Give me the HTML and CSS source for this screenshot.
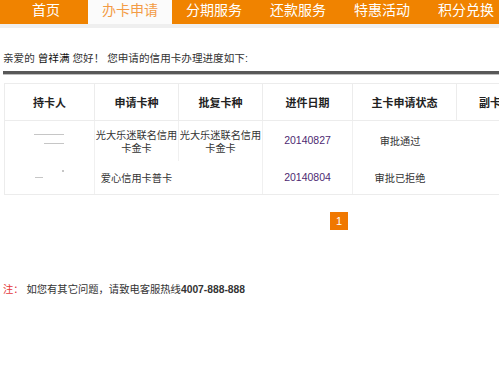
FILE: index.html
```html
<!DOCTYPE html>
<html lang="zh-CN">
<head>
<meta charset="utf-8">
<title>办卡申请进度</title>
<link rel="stylesheet" href="styles.css">
</head>
<body>
<div class="page">
  <nav class="nav">
    <a class="nav-item">首页</a>
    <a class="nav-item active">办卡申请</a>
    <a class="nav-item">分期服务</a>
    <a class="nav-item">还款服务</a>
    <a class="nav-item">特惠活动</a>
    <a class="nav-item">积分兑换</a>
  </nav>
  <div class="nav-strip"></div>
  <div class="content">
    <p class="greet">亲爱的 <span class="name">曾祥满</span> 您好！ 您申请的信用卡办理进度如下:</p>
    <div class="rule"></div>
    <div class="table-wrap">
    <table class="prog">
      <colgroup>
        <col class="c1"><col class="c2"><col class="c3"><col class="c4"><col class="c5"><col class="c6">
      </colgroup>
      <thead>
        <tr class="head">
          <th>持卡人</th>
          <th>申请卡种</th>
          <th>批复卡种</th>
          <th>进件日期</th>
          <th>主卡申请状态</th>
          <th class="last">副卡</th>
        </tr>
      </thead>
      <tbody>
        <tr class="r1">
          <td class="holder"><span class="mask m1"></span><span class="mask m2"></span></td>
          <td class="card"><div class="card-name">光大乐迷联名信用卡金卡</div></td>
          <td class="card"><div class="card-name">光大乐迷联名信用卡金卡</div></td>
          <td class="date">20140827</td>
          <td class="status nb">审批通过</td>
          <td class="nb"></td>
        </tr>
        <tr class="r2">
          <td class="holder"><span class="mask m3"></span><span class="mask m4"></span></td>
          <td class="card nb"><div class="card-name">爱心信用卡普卡</div></td>
          <td class="card"></td>
          <td class="date">20140804</td>
          <td class="status nb">审批已拒绝</td>
          <td class="nb"></td>
        </tr>
      </tbody>
    </table>
    </div>
    <div class="pager"><span class="page-num">1</span></div>
    <p class="note"><span class="note-label">注：</span> 如您有其它问题，请致电客服热线<b class="hotline">4007-888-888</b></p>
  </div>
</div>
</body>
</html>
```
FILE: styles.css
```css
html, body {
  margin: 0;
  padding: 0;
  background: #fff;
}
body {
  font-family: "Liberation Sans", "Noto Sans CJK SC", sans-serif;
  color: #333;
  font-size: 11px;
}
.page {
  width: 499px;
  overflow: hidden;
}
.nav {
  display: flex;
  height: 24px;
  background: #f08300;
  padding-left: 4px;
  white-space: nowrap;
}
.nav-item {
  flex: 0 0 84px;
  text-align: center;
  color: #fff;
  font-size: 14px;
  line-height: 18px;
  font-family: "Noto Sans CJK SC", sans-serif;
}
.nav-item.active {
  background: #fbfbfb;
  color: #f39b45;
}
.nav-strip {
  height: 4px;
  background: #efefef;
}
.content {
  padding-left: 3px;
}
.greet {
  margin: 23px 0 0;
  line-height: 14px;
  font-size: 10.6px;
  color: #333;
  white-space: nowrap;
}
.name {
  color: #111;
}
.rule {
  margin-top: 6px;
  height: 3px;
  background: #585858;
  border-bottom: 1px solid #bdbdbd;
}
.table-wrap {
  margin-top: 8px;
  margin-left: 1px;
  width: 495px;
  overflow: hidden;
}
.prog {
  border-collapse: separate;
  border-spacing: 0;
  table-layout: fixed;
  width: 556px;
  border-top: 1px solid #ececec;
  border-left: 1px solid #ececec;
  border-bottom: 1px solid #ececec;
}
.c1 { width: 90px; }
.c2 { width: 84px; }
.c3 { width: 84px; }
.c4 { width: 90px; }
.c5 { width: 104px; }
.c6 { width: 104px; }
.prog th {
  padding: 0;
  font-size: 11px;
  font-weight: bold;
  color: #222;
  text-align: center;
  border-right: 1px solid #ececec;
  border-bottom: 1px solid #ececec;
  font-family: "Noto Sans CJK SC", sans-serif;
  white-space: nowrap;
}
.prog th.last {
  text-align: left;
  padding-left: 22px;
}
.head { height: 37px; }
.r1 { height: 40px; }
.r2 { height: 33px; }
.prog td {
  padding: 0;
  text-align: center;
  vertical-align: middle;
  font-size: 10.2px;
  line-height: 13.4px;
  color: #333;
  border-right: 1px solid #f0f0f0;
  font-family: "Noto Sans CJK SC", sans-serif;
}
.prog td.nb { border-right-color: transparent; }
.card-name {
  display: flex;
  flex-wrap: wrap;
  justify-content: center;
  word-break: break-all;
  text-align: center;
  text-align-last: center;
}
.prog td.date {
  font-family: "Liberation Sans", sans-serif;
  font-size: 10.5px;
  color: #4e2a72;
}
.prog td.status { padding-right: 9px; }
.holder {
  position: relative;
}
.mask {
  position: absolute;
  height: 1px;
  background: #a0a0a0;
  opacity: 0.6;
}
.m1 { left: 29px; top: 13px; width: 30px; }
.m2 { left: 39px; top: 22px; width: 20px; }
.m3 { left: 30px; top: 16px; width: 8px; }
.m4 { left: 57px; top: 9px; width: 2px; height: 2px; }
.pager {
  margin-top: 17px;
  padding-left: 327px;
  height: 18px;
}
.page-num {
  display: block;
  width: 18px;
  height: 18px;
  line-height: 18px;
  background: #f07800;
  color: #fff;
  text-align: center;
  font-size: 11px;
}
.note {
  margin: 52px 0 0;
  line-height: 14px;
  font-size: 10.3px;
  color: #333;
  white-space: nowrap;
}
.note-label {
  color: #e4393c;
  font-family: "Noto Sans CJK SC", sans-serif;
}
.hotline {
  font-weight: bold;
  color: #333;
}
```
